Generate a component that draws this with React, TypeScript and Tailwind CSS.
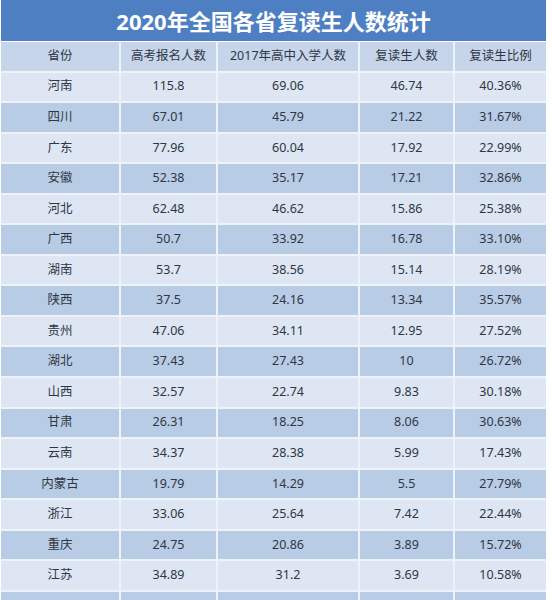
import React from "react";

const rows: [string, string, string, string, string][] = [
  ["河南", "115.8", "69.06", "46.74", "40.36%"],
  ["四川", "67.01", "45.79", "21.22", "31.67%"],
  ["广东", "77.96", "60.04", "17.92", "22.99%"],
  ["安徽", "52.38", "35.17", "17.21", "32.86%"],
  ["河北", "62.48", "46.62", "15.86", "25.38%"],
  ["广西", "50.7", "33.92", "16.78", "33.10%"],
  ["湖南", "53.7", "38.56", "15.14", "28.19%"],
  ["陕西", "37.5", "24.16", "13.34", "35.57%"],
  ["贵州", "47.06", "34.11", "12.95", "27.52%"],
  ["湖北", "37.43", "27.43", "10", "26.72%"],
  ["山西", "32.57", "22.74", "9.83", "30.18%"],
  ["甘肃", "26.31", "18.25", "8.06", "30.63%"],
  ["云南", "34.37", "28.38", "5.99", "17.43%"],
  ["内蒙古", "19.79", "14.29", "5.5", "27.79%"],
  ["浙江", "33.06", "25.64", "7.42", "22.44%"],
  ["重庆", "24.75", "20.86", "3.89", "15.72%"],
  ["江苏", "34.89", "31.2", "3.69", "10.58%"],
  ["", "", "", "", ""],
];

const header = ["省份", "高考报名人数", "2017年高中入学人数", "复读生人数", "复读生比例"];

export default function App() {
  return (
    <div
      className="w-[552px] h-[600px] overflow-hidden bg-white"
      style={{ fontFamily: '"Noto Sans", "Noto Sans CJK SC", sans-serif' }}
    >
      <div className="ml-[1px] w-[545px]">
        <div className="h-[41px] bg-[#4e7fc2] flex items-center justify-center text-white font-bold text-[22px] leading-none">
          2020年全国各省复读生人数统计
        </div>
        <div className="mt-[1px] grid grid-cols-[118px_95px_140px_93px_91px] gap-[2px] bg-[#eef3f9] text-[12.5px] text-[#2f3744]">
          {header.map((h, i) => (
            <div key={"h" + i} className="h-[28.56px] bg-[#c6d5ea] flex items-center justify-center">
              {h}
            </div>
          ))}
          {rows.map((r, ri) =>
            r.map((c, ci) => (
              <div
                key={ri + "-" + ci}
                className={
                  "h-[28.56px] flex items-center justify-center " +
                  (ri % 2 === 0 ? "bg-[#dde6f2]" : "bg-[#b9cce6]")
                }
              >
                {c}
              </div>
            ))
          )}
        </div>
      </div>
    </div>
  );
}
